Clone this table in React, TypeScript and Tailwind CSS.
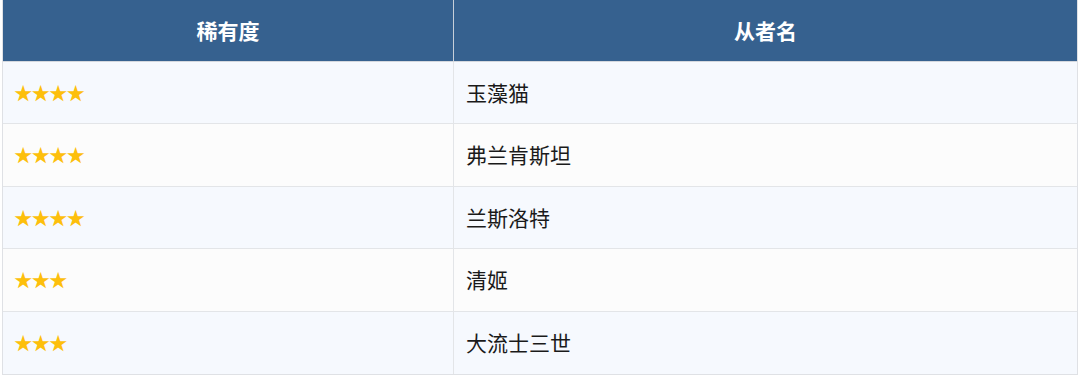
import React from "react";

const rows = [
  { stars: "★★★★", name: "玉藻猫" },
  { stars: "★★★★", name: "弗兰肯斯坦" },
  { stars: "★★★★", name: "兰斯洛特" },
  { stars: "★★★", name: "清姬" },
  { stars: "★★★", name: "大流士三世" },
];

export default function App() {
  return (
    <div
      className="w-[1080px] h-[378px] bg-white pl-[2px] pt-0"
      style={{ fontFamily: '"Noto Sans CJK SC", "Noto Sans", sans-serif' }}
    >
      <div className="w-[1076px] border-l border-r border-b border-[#dfe1e5]">
        <div className="grid grid-cols-[451px_1fr] h-[62px] bg-[#36618f] border-b border-[#d4d8de] text-white font-bold text-[21px]">
          <div className="flex items-center justify-center border-r border-[#c7cfd9]">稀有度</div>
          <div className="flex items-center justify-center">从者名</div>
        </div>
        {rows.map((r, i) => (
          <div
            key={i}
            className={`grid grid-cols-[451px_1fr] h-[62.4px] ${
              i < rows.length - 1 ? "border-b border-[#e3e5e8]" : ""
            } ${i % 2 === 0 ? "bg-[#f6f9fe]" : "bg-[#fcfcfc]"}`}
          >
            <div className="flex items-center pl-[11px] border-r border-[#e3e5e8] text-[#fdbf0c] text-[18.5px] tracking-[-1px]">
              {r.stars}
            </div>
            <div className="flex items-center pl-[12px] text-[#1a1a1a] text-[21px]">{r.name}</div>
          </div>
        ))}
      </div>
    </div>
  );
}
